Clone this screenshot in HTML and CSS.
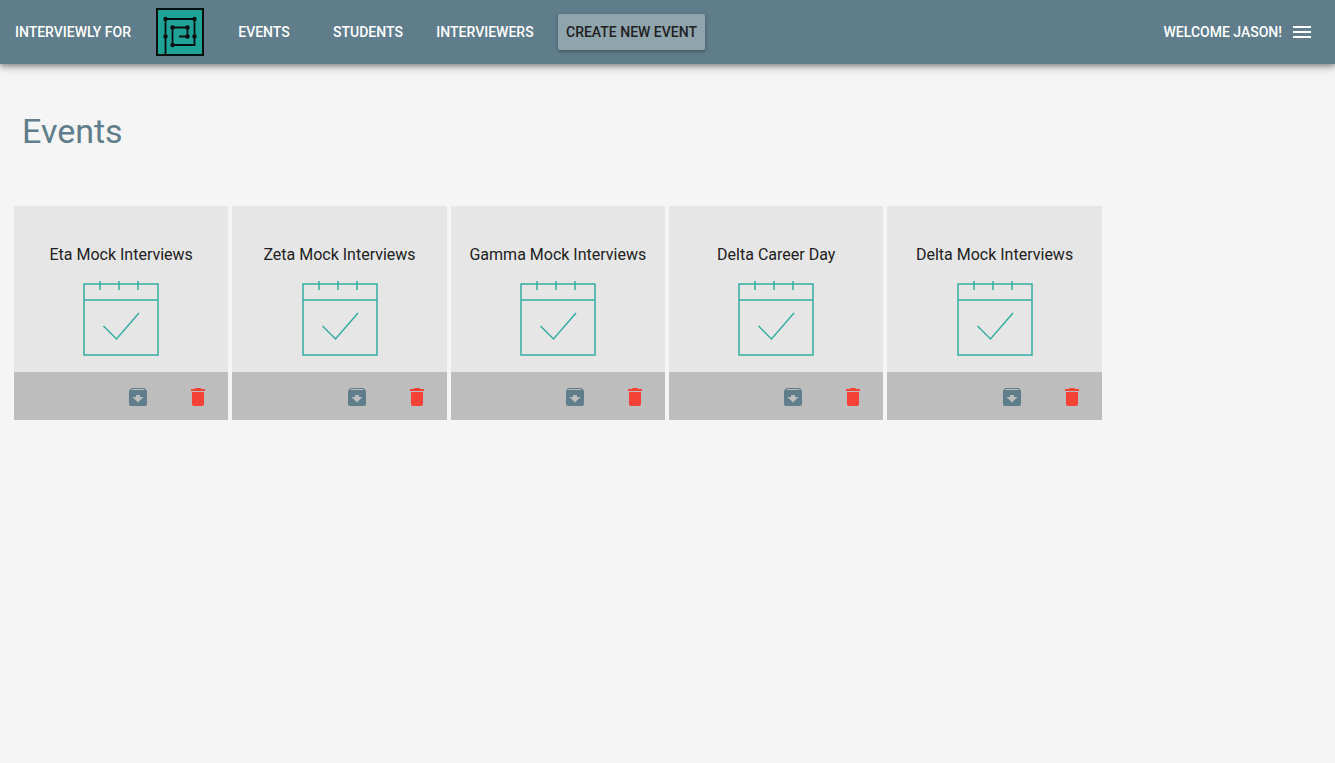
FILE: index.html
```html
<!DOCTYPE html>
<html lang="en">
<head>
<meta charset="utf-8">
<meta name="viewport" content="width=device-width, initial-scale=1">
<title>Interviewly</title>
<link rel="stylesheet" href="styles.css">
</head>
<body>
<svg width="0" height="0" class="sprite" aria-hidden="true">
  <symbol id="calendar" viewBox="0 0 76 76">
    <path d="M1 4H75V75H1ZM1 20H75M17 1V10M36 1V10M55 1V10M20.5 46L33.5 59L56 33" fill="none" stroke="currentColor" stroke-width="1.5"/>
  </symbol>
  <symbol id="archive" viewBox="0 0 24 24">
    <path d="M20.54 5.23l-1.39-1.68C18.88 3.21 18.47 3 18 3H6c-.47 0-.88.21-1.16.55L3.46 5.23C3.17 5.57 3 6.02 3 6.5V19c0 1.1.9 2 2 2h14c1.1 0 2-.9 2-2V6.5c0-.48-.17-.93-.46-1.27zM12 17.5L6.5 12H10v-2h4v2h3.5L12 17.5zM5.12 5l.81-1h12l.94 1H5.12z" fill="currentColor"/>
  </symbol>
  <symbol id="trash" viewBox="0 0 24 24">
    <path d="M6 19c0 1.1.9 2 2 2h8c1.1 0 2-.9 2-2V7H6v12zM19 4h-3.5l-1-1h-5l-1 1H5v2h14V4z" fill="currentColor"/>
  </symbol>
</svg>
<header class="app-bar">
  <a class="nav-item brand" href="#">Interviewly for</a>
  <svg class="logo" viewBox="0 0 48 48" role="img" aria-label="Cohort logo">
    <rect x="1" y="1" width="46" height="46" fill="#1fa396" stroke="#08100f" stroke-width="2"/>
    <path d="M9.5 46V11H38.5V37H16.5V19.5H31.5V28.5H23" fill="none" stroke="#08100f" stroke-width="1.8"/>
    <g fill="#08100f">
      <circle cx="9.5" cy="11" r="2.2"/><circle cx="38.5" cy="11" r="2.2"/>
      <circle cx="9.5" cy="28.5" r="2.2"/><circle cx="38.5" cy="28.5" r="2.2"/>
      <circle cx="16.5" cy="19.5" r="2.2"/><circle cx="31.5" cy="19.5" r="2.2"/>
      <circle cx="16.5" cy="37" r="2.2"/><circle cx="31.5" cy="28.5" r="2.2"/>
    </g>
  </svg>
  <nav class="nav">
    <a class="nav-item nav-link" href="#">Events</a>
    <a class="nav-item nav-link" href="#">Students</a>
    <a class="nav-item nav-link wide" href="#">Interviewers</a>
  </nav>
  <button class="nav-item create" type="button">Create new event</button>
  <div class="account">
    <span class="welcome">Welcome Jason!</span>
    <button class="menu" type="button" aria-label="Menu">
      <svg viewBox="0 0 24 24" width="24" height="24"><path d="M3 18h18v-2H3v2zm0-5h18v-2H3v2zm0-7v2h18V6H3z" fill="currentColor"/></svg>
    </button>
  </div>
</header>
<main>
  <h1 class="title">Events</h1>
  <ul class="events">
    <li class="card">
      <a class="card-body" href="#"><span>Eta Mock Interviews</span><svg class="calendar"><use href="#calendar"/></svg></a>
      <div class="card-actions">
        <button class="action archive" type="button" aria-label="Archive"><svg class="icon"><use href="#archive"/></svg></button>
        <button class="action delete" type="button" aria-label="Delete"><svg class="icon"><use href="#trash"/></svg></button>
      </div>
    </li>
    <li class="card">
      <a class="card-body" href="#"><span>Zeta Mock Interviews</span><svg class="calendar"><use href="#calendar"/></svg></a>
      <div class="card-actions">
        <button class="action archive" type="button" aria-label="Archive"><svg class="icon"><use href="#archive"/></svg></button>
        <button class="action delete" type="button" aria-label="Delete"><svg class="icon"><use href="#trash"/></svg></button>
      </div>
    </li>
    <li class="card">
      <a class="card-body" href="#"><span>Gamma Mock Interviews</span><svg class="calendar"><use href="#calendar"/></svg></a>
      <div class="card-actions">
        <button class="action archive" type="button" aria-label="Archive"><svg class="icon"><use href="#archive"/></svg></button>
        <button class="action delete" type="button" aria-label="Delete"><svg class="icon"><use href="#trash"/></svg></button>
      </div>
    </li>
    <li class="card">
      <a class="card-body" href="#"><span>Delta Career Day</span><svg class="calendar"><use href="#calendar"/></svg></a>
      <div class="card-actions">
        <button class="action archive" type="button" aria-label="Archive"><svg class="icon"><use href="#archive"/></svg></button>
        <button class="action delete" type="button" aria-label="Delete"><svg class="icon"><use href="#trash"/></svg></button>
      </div>
    </li>
    <li class="card">
      <a class="card-body" href="#"><span>Delta Mock Interviews</span><svg class="calendar"><use href="#calendar"/></svg></a>
      <div class="card-actions">
        <button class="action archive" type="button" aria-label="Archive"><svg class="icon"><use href="#archive"/></svg></button>
        <button class="action delete" type="button" aria-label="Delete"><svg class="icon"><use href="#trash"/></svg></button>
      </div>
    </li>
  </ul>
</main>
</body>
</html>
```
FILE: styles.css
```css
* { box-sizing: border-box; }

body {
  margin: 0;
  background: #f5f5f5;
  color: #212121;
  font-family: Roboto, sans-serif;
}

a { color: inherit; text-decoration: none; }

button {
  border: 0;
  padding: 0;
  background: none;
  color: inherit;
  font: inherit;
  cursor: pointer;
}

.sprite { position: absolute; }

.app-bar {
  display: flex;
  align-items: center;
  gap: 16px;
  min-height: 64px;
  padding: 0 21px 0 6px;
  background: #607d8b;
  color: #fff;
  box-shadow: 0 2px 4px rgba(0, 0, 0, 0.2), 0 4px 6px rgba(0, 0, 0, 0.16), 0 2px 12px rgba(0, 0, 0, 0.16);
}

.nav-item,
.welcome {
  font-size: 14px;
  font-weight: 500;
  line-height: 20px;
  text-transform: uppercase;
  white-space: nowrap;
}

.nav-item { padding: 8px 6px; text-align: center; }

.brand { min-width: 134px; }

.logo { width: 48px; height: 48px; flex: none; }

.nav { display: flex; gap: 16px; }

.nav-link { min-width: 88px; }

.wide { min-width: 114px; }

.create {
  min-width: 147px;
  border-radius: 2px;
  background: #90a4ae;
  color: #212121;
  box-shadow: 0 1px 5px rgba(0, 0, 0, 0.2), 0 2px 2px rgba(0, 0, 0, 0.14);
}

.account {
  display: flex;
  align-items: center;
  gap: 8px;
  margin-left: auto;
}

.menu { display: flex; }

.title {
  margin: 0;
  padding: 47px 22px 55px;
  color: #607d8b;
  font-size: 34px;
  font-weight: 400;
  line-height: 40px;
}

.events {
  display: grid;
  grid-template-columns: repeat(6, 1fr);
  gap: 4px;
  margin: 0;
  padding: 0 15px 0 14px;
  list-style: none;
}

.card {
  display: flex;
  flex-direction: column;
  aspect-ratio: 1;
  background: #e6e6e6;
}

.card-body {
  display: flex;
  flex: 1;
  flex-direction: column;
  align-items: center;
  gap: 15px;
  padding-top: 39px;
  font-size: 16px;
  line-height: 20px;
  white-space: nowrap;
}

.calendar { width: 76px; height: 76px; color: #35aea1; }

.card-actions {
  display: flex;
  justify-content: flex-end;
  height: 48px;
  padding-top: 2px;
  background: #bdbdbd;
}

.action {
  display: flex;
  align-items: center;
  justify-content: center;
  width: 60px;
}

.icon { width: 24px; height: 24px; }

.archive { color: #607d8b; }

.delete { color: #f44336; }
```
